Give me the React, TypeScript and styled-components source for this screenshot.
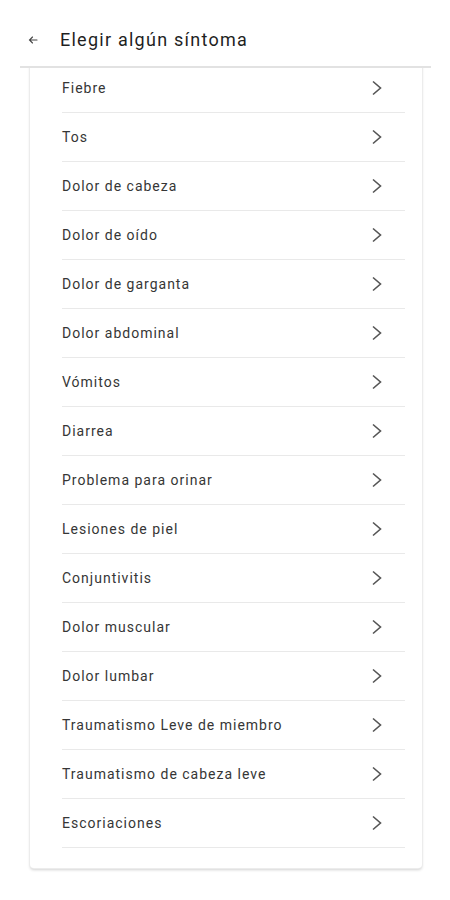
import React from 'react';
import styled, { createGlobalStyle } from 'styled-components';

const GlobalStyle = createGlobalStyle`
  html, body {
    margin: 0;
    padding: 0;
    background: #ffffff;
    font-family: Roboto, "Noto Sans", sans-serif;
  }
`;

const Page = styled.div`
  width: 450px;
  min-height: 900px;
  background: #ffffff;
`;

const Header = styled.header`
  position: relative;
  z-index: 2;
  display: flex;
  align-items: center;
  box-sizing: border-box;
  height: 68px;
  margin: 0 19px 0 20px;
  padding: 13px 0 0 7px;
  background: #ffffff;
  border-bottom: 2px solid #e2e2e2;
`;

const BackButton = styled.button`
  display: flex;
  align-items: center;
  justify-content: center;
  width: 12px;
  height: 12px;
  padding: 0;
  border: 0;
  background: none;
  color: #444;
  cursor: pointer;
`;

const Title = styled.h1`
  margin: 0 0 0 21px;
  font-size: 18px;
  font-weight: 400;
  letter-spacing: 1.25px;
  color: #1f1f1f;
`;

const Card = styled.ul`
  position: relative;
  z-index: 1;
  list-style: none;
  margin: -4px 28px 0 30px;
  padding: 0 17px 20px 32px;
  background: #ffffff;
  border-radius: 0 0 4px 4px;
  box-shadow: 0 0 0 1px #ececec, 0 2px 3px rgba(0, 0, 0, 0.18);
`;

const Row = styled.li`
  display: flex;
  align-items: center;
  justify-content: space-between;
  height: 48px;
  border-bottom: 1px solid #e9e9e9;
  cursor: pointer;
`;

const Label = styled.span`
  font-size: 14px;
  letter-spacing: 1px;
  color: #363636;
`;

const Chevron = styled.svg`
  width: 12px;
  height: 16px;
  margin-right: 22px;
  color: #555;
`;

const symptoms = [
  'Fiebre',
  'Tos',
  'Dolor de cabeza',
  'Dolor de oído',
  'Dolor de garganta',
  'Dolor abdominal',
  'Vómitos',
  'Diarrea',
  'Problema para orinar',
  'Lesiones de piel',
  'Conjuntivitis',
  'Dolor muscular',
  'Dolor lumbar',
  'Traumatismo Leve de miembro',
  'Traumatismo de cabeza leve',
  'Escoriaciones',
];

export default function App() {
  return (
    <Page>
      <GlobalStyle />
      <Header>
        <BackButton aria-label="Volver">
          <svg width="10" height="10" viewBox="0 0 10 10" fill="none" stroke="currentColor" strokeWidth="1.1" strokeLinecap="round">
            <path d="M9 5H1.5M4.5 2L1.5 5l3 3" />
          </svg>
        </BackButton>
        <Title>Elegir algún síntoma</Title>
      </Header>
      <Card>
        {symptoms.map((s) => (
          <Row key={s}>
            <Label>{s}</Label>
            <Chevron viewBox="0 0 12 16" fill="none" stroke="currentColor" strokeWidth="1.6">
              <path d="M2 1.5l7.5 6.5L2 14.5" />
            </Chevron>
          </Row>
        ))}
      </Card>
    </Page>
  );
}
